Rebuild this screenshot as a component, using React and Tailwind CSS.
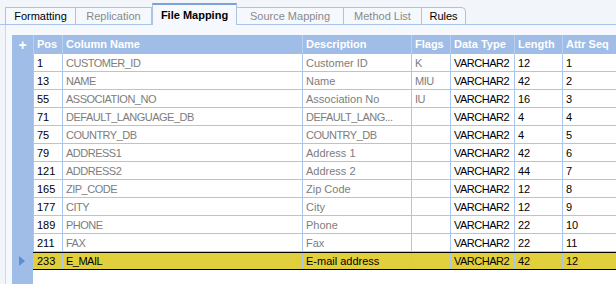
import React from "react";

const tabs = [
  { label: "Formatting", w: "w-[71px]", dim: false },
  { label: "Replication", w: "w-[76px]", dim: true },
  { label: "File Mapping", w: "w-[85px]", active: true },
  { label: "Source Mapping", w: "w-[107px]", dim: true },
  { label: "Method List", w: "w-[78px]", dim: true },
  { label: "Rules", w: "w-[44px]", dim: false, last: true },
];

const cols = [
  { title: "Pos", w: "w-[29px]" },
  { title: "Column Name", w: "w-[240px]" },
  { title: "Description", w: "w-[109px]" },
  { title: "Flags", w: "w-[39px]" },
  { title: "Data Type", w: "w-[64px]" },
  { title: "Length", w: "w-[48px]" },
  { title: "Attr Seq", w: "w-[60px]" },
];

const rows = [
  ["1", "CUSTOMER_ID", "Customer ID", "K", "VARCHAR2", "12", "1"],
  ["13", "NAME", "Name", "MIU", "VARCHAR2", "42", "2"],
  ["55", "ASSOCIATION_NO", "Association No", "IU", "VARCHAR2", "16", "3"],
  ["71", "DEFAULT_LANGUAGE_DB", "DEFAULT_LANG...", "", "VARCHAR2", "4", "4"],
  ["75", "COUNTRY_DB", "COUNTRY_DB", "", "VARCHAR2", "4", "5"],
  ["79", "ADDRESS1", "Address 1", "", "VARCHAR2", "42", "6"],
  ["121", "ADDRESS2", "Address 2", "", "VARCHAR2", "44", "7"],
  ["165", "ZIP_CODE", "Zip Code", "", "VARCHAR2", "12", "8"],
  ["177", "CITY", "City", "", "VARCHAR2", "12", "9"],
  ["189", "PHONE", "Phone", "", "VARCHAR2", "22", "10"],
  ["211", "FAX", "Fax", "", "VARCHAR2", "22", "11"],
  ["233", "E_MAIL", "E-mail address", "", "VARCHAR2", "42", "12"],
];

// columns 1..3 are drawn in grey text, the rest in black
const greyCols = [1, 2, 3];

// all-caps words run a bit narrower in the original font
const isCaps = (v) => /[A-Z]/.test(v) && v === v.toUpperCase();

const App = () => {
  return (
    <div
      className="w-[616px] h-[284px] overflow-hidden bg-[#f2f6fb] text-[11px] leading-none"
      style={{ fontFamily: '"Liberation Sans", Arial, sans-serif' }}
    >
      {/* tab strip */}
      <div className="flex items-end h-[25px] pl-[5px] border-b border-[#a9c4e8]">
        {tabs.map((t) =>
          t.active ? (
            <div
              key={t.label}
              className={`${t.w} h-[22px] -mb-px flex items-center justify-center bg-[#f5f8fd] border-t-2 border-t-[#7ea2d8] border-x border-[#a9c4e8] font-bold text-black`}
            >
              {t.label}
            </div>
          ) : (
            <div
              key={t.label}
              className={`${t.w} h-[17px] flex items-center justify-center border-t border-r border-[#a9c4e8] bg-[#f5f8fd] ${
                t.label === "Formatting" ? "border-l" : ""
              } ${t.last ? "rounded-tr-[5px]" : ""} ${t.dim ? "text-[#8a8a8a]" : "text-black"}`}
            >
              {t.label}
            </div>
          )
        )}
      </div>

      {/* panel */}
      <div className="ml-[5px] h-[259px] border-l border-[#c9daf0] bg-[#f5f8fd] pt-[10px] pl-[6px]">
        <div className="flex h-full">
          {/* row header column */}
          <div className="w-[21px] shrink-0 bg-[#9fbde6] flex flex-col">
            <div className="h-[19px] flex items-center justify-center text-white font-bold text-[14px]">
              +
            </div>
            {rows.map((r, i) => (
              <div key={r[0]} className="h-[18px] flex items-center justify-center">
                {i === rows.length - 1 && (
                  <svg width="6" height="10" viewBox="0 0 6 10" className="ml-[-2px]">
                    <path d="M0 0 L6 5 L0 10 Z" fill="#5a8ed6" />
                  </svg>
                )}
              </div>
            ))}
          </div>

          {/* grid */}
          <div className="flex-1 bg-white">
            <div className="flex h-[19px] bg-[#9fbde6]">
              {cols.map((c) => (
                <div
                  key={c.title}
                  className={`${c.w} shrink-0 flex items-center px-[3px] border-l border-[#b9d0ef] text-white font-bold`}
                >
                  {c.title}
                </div>
              ))}
            </div>
            {rows.map((r, i) => {
              const sel = i === rows.length - 1;
              return (
                <div
                  key={r[0]}
                  className={`flex h-[18px] ${
                    sel
                      ? "bg-[#e2cf3c] border-y border-black"
                      : "border-b border-[#a9c6ee]"
                  }`}
                >
                  {r.map((v, j) => (
                    <div
                      key={j}
                      className={`${cols[j].w} shrink-0 flex items-center pl-[3px] pr-[2px] pt-px border-l border-[#a9c6ee] whitespace-nowrap ${
                        isCaps(v) ? "tracking-[-0.5px]" : ""
                      } ${
                        sel ? "text-black" : greyCols.includes(j) ? "text-[#7d7d7d]" : "text-black"
                      }`}
                    >
                      {v}
                    </div>
                  ))}
                </div>
              );
            })}
          </div>
        </div>
      </div>
    </div>
  );
};

export default App;
